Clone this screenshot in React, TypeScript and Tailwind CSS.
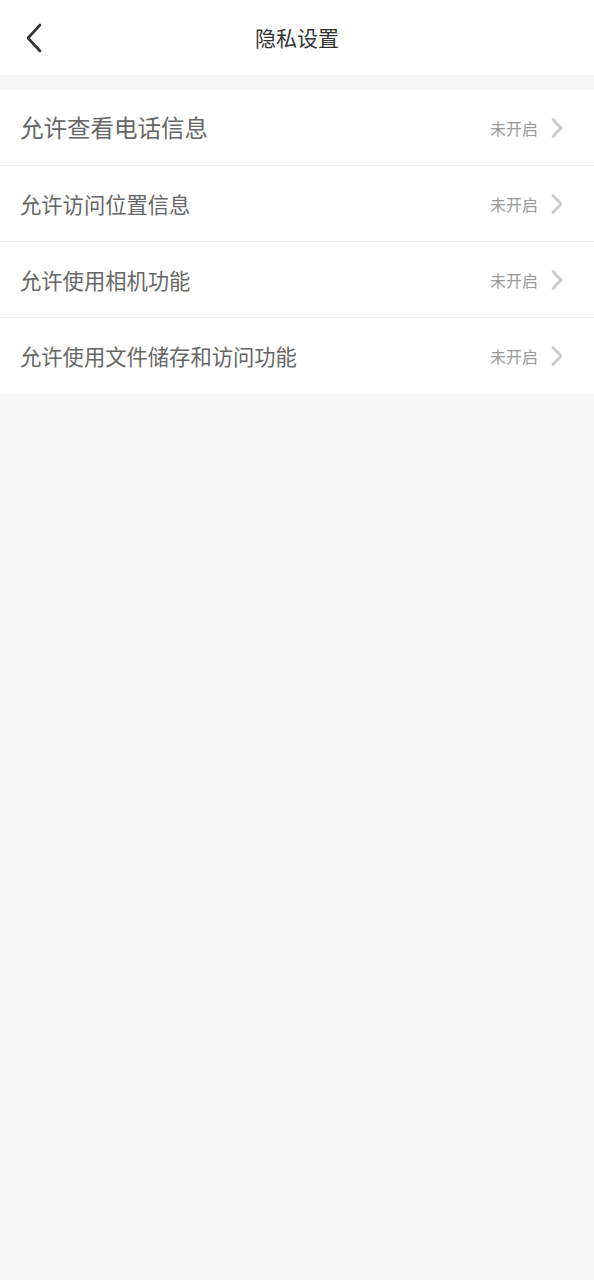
const font = {
  fontFamily: '"Noto Sans CJK SC", "Noto Sans", sans-serif',
}

const items = [
  { label: '允许查看电话信息', big: true },
  { label: '允许访问位置信息' },
  { label: '允许使用相机功能' },
  { label: '允许使用文件储存和访问功能' },
]

function ChevronRight() {
  return (
    <svg width="14" height="22" viewBox="0 0 14 22" fill="none">
      <path d="M3 2.5 L11 11 L3 19.5" stroke="#cccccc" strokeWidth="2.8" strokeLinecap="round" strokeLinejoin="round" />
    </svg>
  )
}

export default function App() {
  return (
    <div className="min-h-[1280px] bg-[#f6f6f6]" style={font}>
      {/* Header */}
      <div className="relative flex h-[75px] items-center justify-center bg-white">
        <button className="absolute left-[22px] top-[22px] flex h-[32px] w-[24px] items-center justify-center">
          <svg width="20" height="30" viewBox="0 0 20 30" fill="none">
            <path d="M16 2 L4 15 L16 28" stroke="#333333" strokeWidth="2.6" strokeLinecap="round" strokeLinejoin="round" />
          </svg>
        </button>
        <h1 className="text-[21px] leading-none text-[#333333]">隐私设置</h1>
      </div>

      {/* List */}
      <div className="mt-[15px] bg-white">
        {items.map((item, i) => (
          <div
            key={item.label}
            className={
              'flex h-[76px] items-center justify-between pl-[20px] pr-[30px] ' +
              (i < items.length - 1 ? 'border-b border-[#efefef]' : '')
            }
          >
            <span
              className={
                item.big
                  ? 'text-[23.5px] text-[#666666]'
                  : 'text-[21.3px] text-[#666666]'
              }
            >
              {item.label}
            </span>
            <div className="flex items-center gap-[12px]">
              <span className="text-[16px] text-[#999999]">未开启</span>
              <ChevronRight />
            </div>
          </div>
        ))}
      </div>
    </div>
  )
}
